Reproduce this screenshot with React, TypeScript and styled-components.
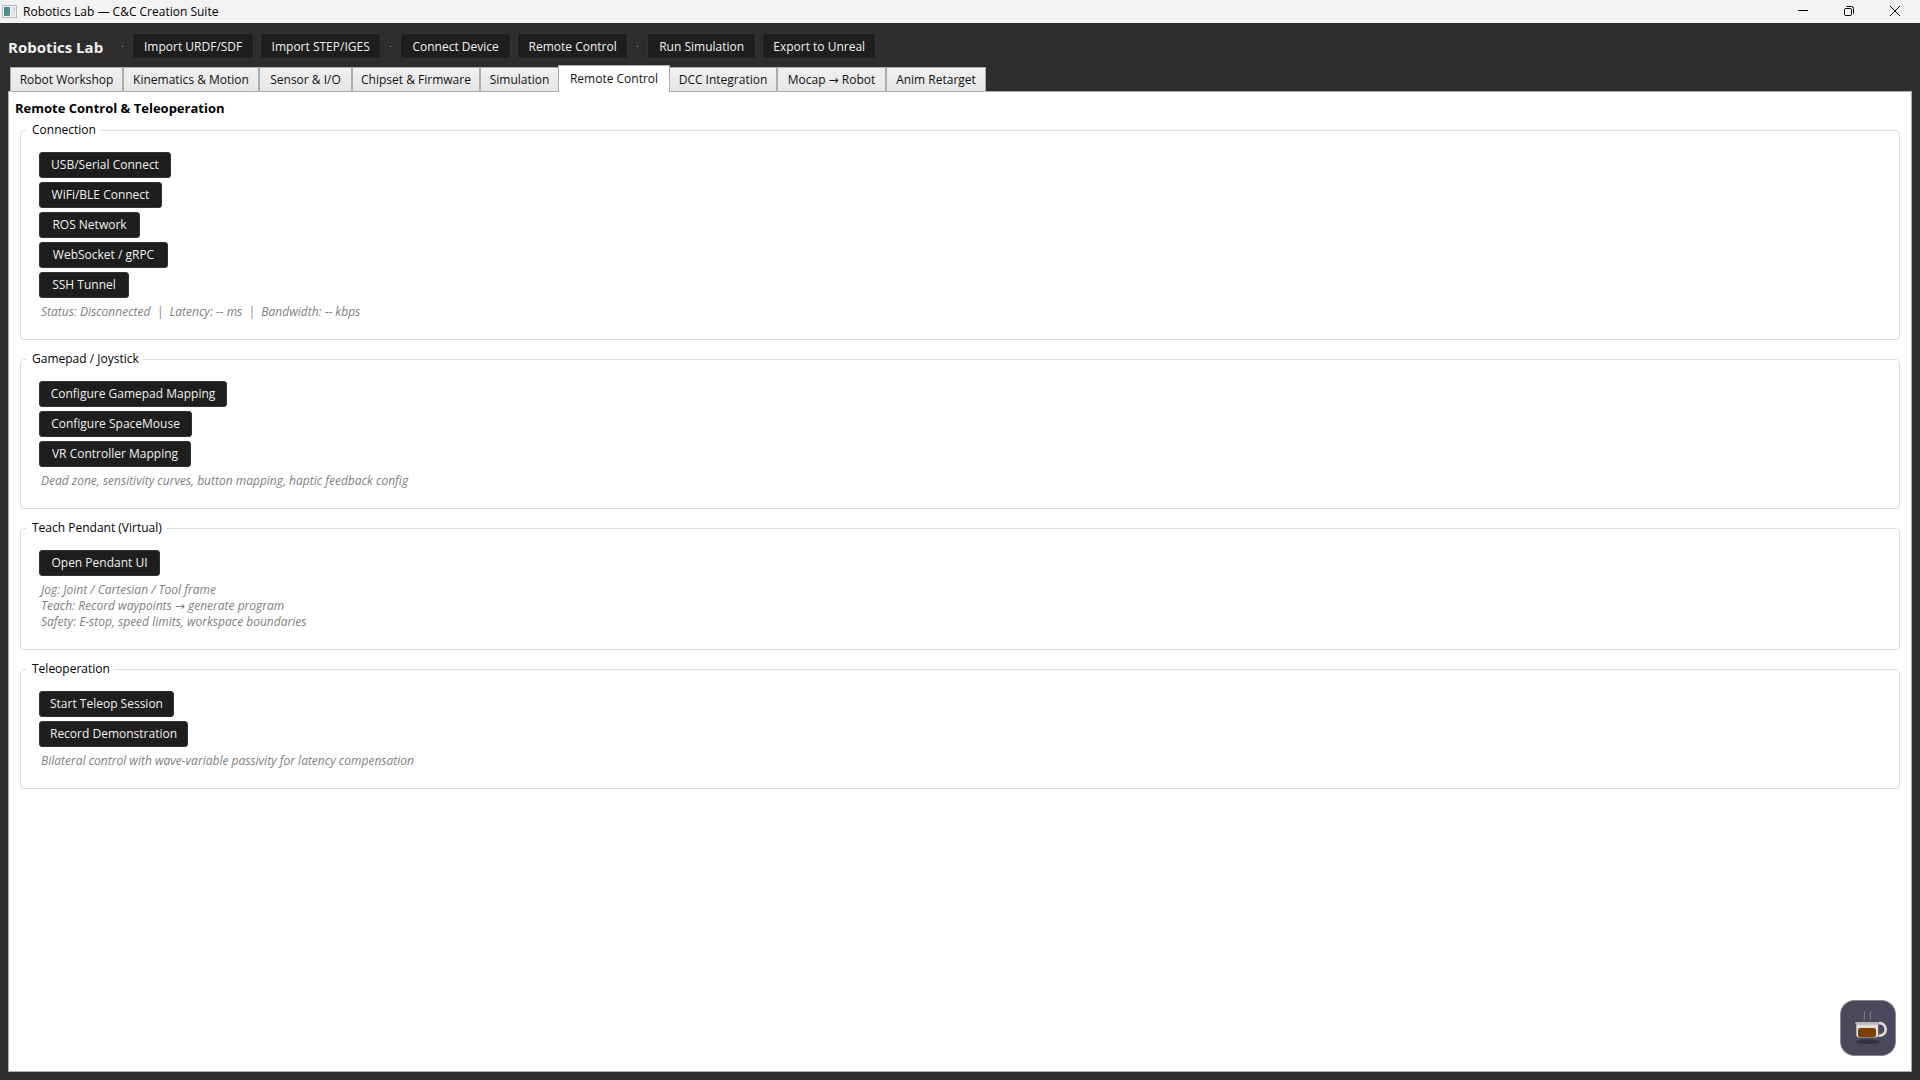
import React from "react";
import styled, { createGlobalStyle, css } from "styled-components";

const Global = createGlobalStyle`
  * { box-sizing: border-box; }
  html, body { margin: 0; height: 100%; }
  #root { height: 100%; }
  body, button {
    font-family: "Open Sans", "DejaVu Sans", sans-serif;
    font-size: 12px;
    line-height: 16px;
  }
`;

const Window = styled.div`
  display: flex;
  flex-direction: column;
  min-height: 100vh;
  background: #2d2d2d;
`;

const TitleBar = styled.header`
  display: flex;
  align-items: center;
  height: 23px;
  padding-left: 2px;
  background: #f3f3f3;
  color: #000;
`;

const TitleText = styled.span`
  flex: 1;
  margin-left: 6px;
`;

const CaptionButton = styled.button`
  display: flex;
  align-items: center;
  justify-content: center;
  width: 46px;
  height: 22px;
  padding: 0;
  border: 0;
  background: none;
`;

const CaptionButtons = styled.div`
  display: flex;
  align-self: flex-start;
  margin-right: 2px;
`;

const Brand = styled.h1`
  margin: 0 10px 0 0;
  padding-top: 2px;
  font-size: 15px;
  line-height: 24px;
  font-weight: 700;
  color: #f0f0f0;
`;

const Divider = styled.span`
  width: 1px;
  height: 1px;
  margin: 0 3px;
  background: #9a9a9a;
`;

const ActionButton = styled.button<{ $width: number }>`
  min-width: ${(p) => p.$width}px;
  height: 26px;
  padding: 0 4px;
  border: 1px solid #333;
  border-radius: 3px;
  background: #1e1e1e;
  color: #f0f0f0;
  white-space: nowrap;
`;

const Toolbar = styled.div`
  display: flex;
  align-items: center;
  gap: 6px;
  padding: 10px 8px 6px;

  ${ActionButton} {
    padding-top: 2px;
  }
`;

const TabStrip = styled.div`
  display: flex;
  align-items: flex-end;
  height: 26px;
  padding-left: 10px;
`;

const Tab = styled.button<{ $active: boolean; $width: number }>`
  min-width: ${(p) => p.$width}px;
  height: 24px;
  padding: 0 4px;
  border: 1px solid #acacac;
  border-bottom: 0;
  background: linear-gradient(#f0f0f0, #e5e5e5);
  color: #111;
  white-space: nowrap;
  ${(p) =>
    p.$active &&
    css`
      z-index: 1;
      height: 27px;
      margin: 0 -1px -1px;
      background: #fff;
    `}
`;

const Panel = styled.main`
  flex: 1;
  margin: 0 8px 8px;
  padding: 7px 11px 8px 6px;
  border: 1px solid #acacac;
  background: #fff;
`;

const Heading = styled.h2`
  margin: 0;
  font-size: 13px;
  line-height: 18px;
  font-weight: 700;
  color: #000;
`;

const Group = styled.fieldset`
  min-width: 0;
  margin: 5px 0 11px 5px;
  padding: 14px 18px 19px;
  border: 1px solid #d5dfe5;
  border-radius: 4px;
  & + & { margin-top: 0; }
`;

const Legend = styled.legend`
  margin-left: -13px;
  padding: 0 4px 0 6px;
  color: #000;
`;

const Stack = styled.div`
  display: flex;
  flex-direction: column;
  align-items: flex-start;
  gap: 4px;
`;

const Note = styled.p`
  margin: 2px 0 0 2px;
  font-style: italic;
  color: #808080;
  white-space: pre-wrap;
`;

const CoffeeButton = styled.button`
  position: fixed;
  right: 24px;
  bottom: 24px;
  width: 56px;
  height: 56px;
  padding: 0;
  border: 1px solid #8c8c99;
  border-radius: 14px;
  background: #4a4a5c;

  svg { display: block; }
`;

type Item = { label: string; width: number };

const toolbar: Item[][] = [
  [{ label: "Import URDF/SDF", width: 122 }, { label: "Import STEP/IGES", width: 121 }],
  [{ label: "Connect Device", width: 111 }, { label: "Remote Control", width: 111 }],
  [{ label: "Run Simulation", width: 109 }, { label: "Export to Unreal", width: 114 }],
];

const tabs: Item[] = [
  { label: "Robot Workshop", width: 113 },
  { label: "Kinematics & Motion", width: 136 },
  { label: "Sensor & I/O", width: 93 },
  { label: "Chipset & Firmware", width: 128 },
  { label: "Simulation", width: 79 },
  { label: "Remote Control", width: 112 },
  { label: "DCC Integration", width: 108 },
  { label: "Mocap → Robot", width: 109 },
  { label: "Anim Retarget", width: 100 },
];

const groups: { title: string; actions: Item[]; note: string }[] = [
  {
    title: "Connection",
    actions: [
      { label: "USB/Serial Connect", width: 132 },
      { label: "WiFi/BLE Connect", width: 123 },
      { label: "ROS Network", width: 101 },
      { label: "WebSocket / gRPC", width: 129 },
      { label: "SSH Tunnel", width: 90 },
    ],
    note: "Status: Disconnected  |  Latency: -- ms  |  Bandwidth: -- kbps",
  },
  {
    title: "Gamepad / Joystick",
    actions: [
      { label: "Configure Gamepad Mapping", width: 188 },
      { label: "Configure SpaceMouse", width: 153 },
      { label: "VR Controller Mapping", width: 152 },
    ],
    note: "Dead zone, sensitivity curves, button mapping, haptic feedback config",
  },
  {
    title: "Teach Pendant (Virtual)",
    actions: [{ label: "Open Pendant UI", width: 121 }],
    note: "Jog: Joint / Cartesian / Tool frame\nTeach: Record waypoints → generate program\nSafety: E-stop, speed limits, workspace boundaries",
  },
  {
    title: "Teleoperation",
    actions: [
      { label: "Start Teleop Session", width: 135 },
      { label: "Record Demonstration", width: 149 },
    ],
    note: "Bilateral control with wave-variable passivity for latency compensation",
  },
];

const activeTab = "Remote Control";

function AppIcon() {
  return (
    <svg width="15" height="13" viewBox="0 0 15 13" aria-hidden="true">
      <defs>
        <linearGradient id="pane" x1="0" y1="0" x2="1" y2="1">
          <stop offset="0" stopColor="#4a7fa8" />
          <stop offset="1" stopColor="#4fa07a" />
        </linearGradient>
      </defs>
      <rect x="0.5" y="0.5" width="14" height="12" fill="#f4f4f4" stroke="#b4bac0" />
      <rect x="2" y="2" width="6" height="9" fill="url(#pane)" />
      <rect x="9" y="2" width="4" height="9" fill="#e3e6ea" />
      <rect x="12" y="2" width="1" height="4" fill="#9cc4b4" />
    </svg>
  );
}

function CoffeeCup() {
  return (
    <svg width="54" height="54" viewBox="0 0 54 54" fill="none" aria-hidden="true">
      <ellipse cx="27" cy="40.7" rx="12" ry="2.4" fill="#353541" />
      <path d="M23.8 11c-1.6 2.5.6 4.500-.9 8M29.800 10.500c-1.700 2.500.7 4.800-.9 8.500" stroke="#7c7c8a" strokeWidth="1.100" strokeLinecap="round" />
      <path d="M37.500 22.200c4.500-.6 7.200 2.600 7.200 6.200s-2.900 6.700-7.200 6.400" stroke="#e0dcda" strokeWidth="2.600" />
      <path d="M15.300 22h21.900v11.500a3 3 0 0 1-3 3h-15.900a3 3 0 0 1-3-3z" fill="#e3dfdc" />
      <rect x="14.300" y="21" width="23" height="2.800" rx="1.200" fill="#bcb8b6" />
      <rect x="17" y="27" width="18" height="9.300" rx="2.400" fill="#7b3f00" />
    </svg>
  );
}

export default function App() {
  return (
    <Window>
      <Global />
      <TitleBar>
        <AppIcon />
        <TitleText>Robotics Lab — C&amp;C Creation Suite</TitleText>
        <CaptionButtons>
          <CaptionButton aria-label="Minimize">
            <svg width="10" height="10" viewBox="0 0 10 10"><path d="M0 4.500h10" stroke="#000" /></svg>
          </CaptionButton>
          <CaptionButton aria-label="Restore">
            <svg width="10" height="10" viewBox="0 0 10 10" fill="none" stroke="#000">
              <rect x="0.5" y="2.500" width="7" height="7" rx="1" />
              <path d="M2.500 0.500h5a2 2 0 0 1 2 2v5" />
            </svg>
          </CaptionButton>
          <CaptionButton aria-label="Close">
            <svg width="10" height="10" viewBox="0 0 10 10"><path d="M0 0l10 10M10 0L0 10" stroke="#000" /></svg>
          </CaptionButton>
        </CaptionButtons>
      </TitleBar>
      <Toolbar>
        <Brand>Robotics Lab</Brand>
        {toolbar.map((set) => (
          <React.Fragment key={set[0].label}>
            <Divider />
            {set.map((b) => (
              <ActionButton key={b.label} $width={b.width}>{b.label}</ActionButton>
            ))}
          </React.Fragment>
        ))}
      </Toolbar>
      <TabStrip role="tablist">
        {tabs.map((t) => (
          <Tab
            key={t.label}
            role="tab"
            aria-selected={t.label === activeTab}
            $active={t.label === activeTab}
            $width={t.width}
          >
            {t.label}
          </Tab>
        ))}
      </TabStrip>
      <Panel>
        <Heading>Remote Control &amp; Teleoperation</Heading>
        {groups.map((g) => (
          <Group key={g.title}>
            <Legend>{g.title}</Legend>
            <Stack>
              {g.actions.map((a) => (
                <ActionButton key={a.label} $width={a.width}>{a.label}</ActionButton>
              ))}
              <Note>{g.note}</Note>
            </Stack>
          </Group>
        ))}
      </Panel>
      <CoffeeButton aria-label="Buy me a coffee">
        <CoffeeCup />
      </CoffeeButton>
    </Window>
  );
}
